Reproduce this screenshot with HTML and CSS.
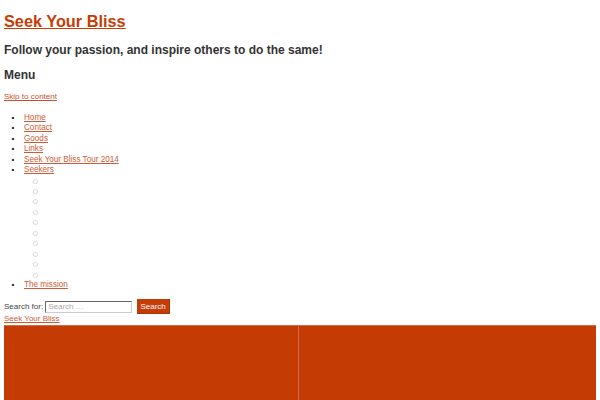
FILE: index.html
```html
<!DOCTYPE html>
<html lang="en">
<head>
<meta charset="utf-8">
<title>Seek Your Bliss</title>
<link rel="stylesheet" href="styles.css">
</head>
<body>
<header class="masthead">
  <h1 class="site-title"><a href="#">Seek Your Bliss</a></h1>
  <h2 class="site-desc">Follow your passion, and inspire others to do the same!</h2>
  <h3 class="menu-toggle">Menu</h3>
  <a class="skip" href="#content">Skip to content</a>
  <ul class="menu">
    <li><a href="#">Home</a></li>
    <li><a href="#">Contact</a></li>
    <li><a href="#">Goods</a></li>
    <li><a href="#">Links</a></li>
    <li><a href="#">Seek Your Bliss Tour 2014</a></li>
    <li><a href="#">Seekers</a>
      <ul class="sub-menu">
        <li></li><li></li><li></li><li></li><li></li>
        <li></li><li></li><li></li><li></li><li></li>
      </ul>
    </li>
    <li><a href="#">The mission</a></li>
  </ul>
  <form class="search">
    <label class="search-label" for="s">Search for:</label>
    <input class="search-field" id="s" type="text" placeholder="Search …">
    <button class="search-btn" type="button">Search</button>
  </form>
  <a class="home-link" href="#">Seek Your Bliss</a>
</header>
<main id="content" class="hero">
  <div class="hero-col"></div>
  <div class="hero-col hero-col-right"></div>
</main>
</body>
</html>
```
FILE: styles.css
```css
html, body {
  background: #fff;
}
body {
  margin: 4px;
  font-family: "Liberation Sans", Arial, sans-serif;
  color: #333;
  font-size: 8px;
  overflow: hidden;
}
a {
  color: #c63c06;
}
.site-title {
  margin: 8.4px 0 13px;
  font-size: 16.3px;
  line-height: 18px;
  font-weight: bold;
}
.site-title a {
  color: #c63c06;
}
.site-desc {
  margin: 0 0 10.7px;
  font-size: 12px;
  line-height: 14px;
  font-weight: bold;
  color: #333;
}
.menu-toggle {
  margin: 0 0 10.1px;
  font-size: 12px;
  line-height: 14px;
  font-weight: bold;
  color: #333;
}
.skip {
  display: block;
  font-size: 8px;
  line-height: 10.4px;
  width: max-content;
  color: #c9502a;
}
.menu {
  margin: 10.3px 0 8.8px;
  padding-left: 20px;
  list-style: disc;
  line-height: 10.45px;
  font-size: 8.15px;
}
.menu > li::marker {
  content: "\2022\2002\2002\2009";
  font-size: 8px;
  font-weight: bold;
  color: #222;
}
.menu a {
  color: #cf5a32;
}
.sub-menu {
  margin: 0;
  padding-left: 20px;
  list-style: circle;
}
.sub-menu > li::marker {
  content: "\25CB\2003";
  font-family: "DejaVu Sans", sans-serif;
  font-size: 6px;
  color: #999;
}
.sub-menu li {
  height: 10.45px;
}
.search {
  display: flex;
  align-items: center;
  height: 15px;
  margin: 0;
}
.search-label {
  color: #444;
  margin-right: 2px;
}
.search-field {
  box-sizing: border-box;
  width: 87px;
  height: 12px;
  padding: 0 2px;
  font: 8px "Liberation Sans", Arial, sans-serif;
  border: 1px solid #ccc;
  border-top-color: #666;
  border-left-color: #666;
  margin: 0 5px 0 0;
}
.search-field::placeholder {
  color: #aaa;
}
.search-btn {
  box-sizing: border-box;
  height: 15px;
  width: 33px;
  padding: 0;
  font: 8px "Liberation Sans", Arial, sans-serif;
  color: #fff;
  background: #c63c06;
  border: 0;
  border-bottom: 1px solid #a3330a;
  border-right: 1px solid #a3330a;
  margin: 0;
}
.home-link {
  display: block;
  width: max-content;
  line-height: 10.4px;
  color: #cf5a32;
}
.hero {
  display: flex;
  height: 200px;
  margin-top: 0;
  background: #c43c04;
  border-top: 1px solid #d56a45;
}
.hero-col {
  flex: 0 0 294px;
}
.hero-col-right {
  flex: 1;
  border-left: 1px solid #d86a44;
}
```
